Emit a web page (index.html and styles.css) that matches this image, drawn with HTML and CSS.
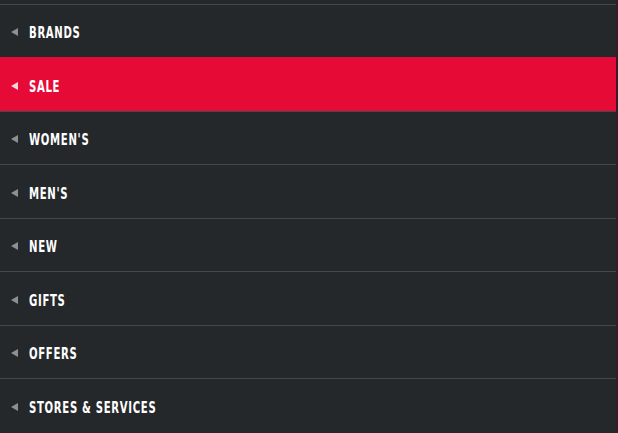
FILE: index.html
```html
<!DOCTYPE html>
<html>
<head>
<meta charset="utf-8">
<link rel="stylesheet" href="styles.css">
</head>
<body>
<nav class="menu">
  <a class="item"><span class="arrow"></span><span class="label">BRANDS</span></a>
  <a class="item sale"><span class="arrow"></span><span class="label">SALE</span></a>
  <a class="item"><span class="arrow"></span><span class="label">WOMEN'S</span></a>
  <a class="item"><span class="arrow"></span><span class="label">MEN'S</span></a>
  <a class="item"><span class="arrow"></span><span class="label">NEW</span></a>
  <a class="item"><span class="arrow"></span><span class="label">GIFTS</span></a>
  <a class="item"><span class="arrow"></span><span class="label">OFFERS</span></a>
  <a class="item"><span class="arrow"></span><span class="label">STORES &amp; SERVICES</span></a>
</nav>
</body>
</html>
```
FILE: styles.css
```css
html, body {
  margin: 0;
  padding: 0;
  background: #25282b;
  height: 100%;
  overflow: hidden;
}
.menu {
  padding-top: 3.5px;
  width: 616px;
  border-right: 2px solid #3a1b24;
  display: flex;
  flex-direction: column;
}
.item {
  display: flex;
  align-items: center;
  gap: 11px;
  height: 46.5px;
  padding: 6px 0 0 11px;
  box-sizing: content-box;
  border-top: 1px solid #45484b;
  color: #ffffff;
  font-family: "DejaVu Sans", sans-serif;
  font-stretch: condensed;
  font-weight: bold;
  font-size: 15px;
  letter-spacing: 0.9px;
}
.item.sale {
  background: #e60b36;
  border-top-color: #e60b36;
}
.arrow {
  width: 0;
  height: 0;
  border-top: 4px solid transparent;
  border-bottom: 4px solid transparent;
  border-right: 7px solid #8d9093;
  margin-top: -3px;
}
.sale .arrow {
  border-right-color: #f6d4dc;
}
.label {
  line-height: 1;
  display: inline-block;
  transform: scaleX(0.75);
  transform-origin: left center;
}
```
